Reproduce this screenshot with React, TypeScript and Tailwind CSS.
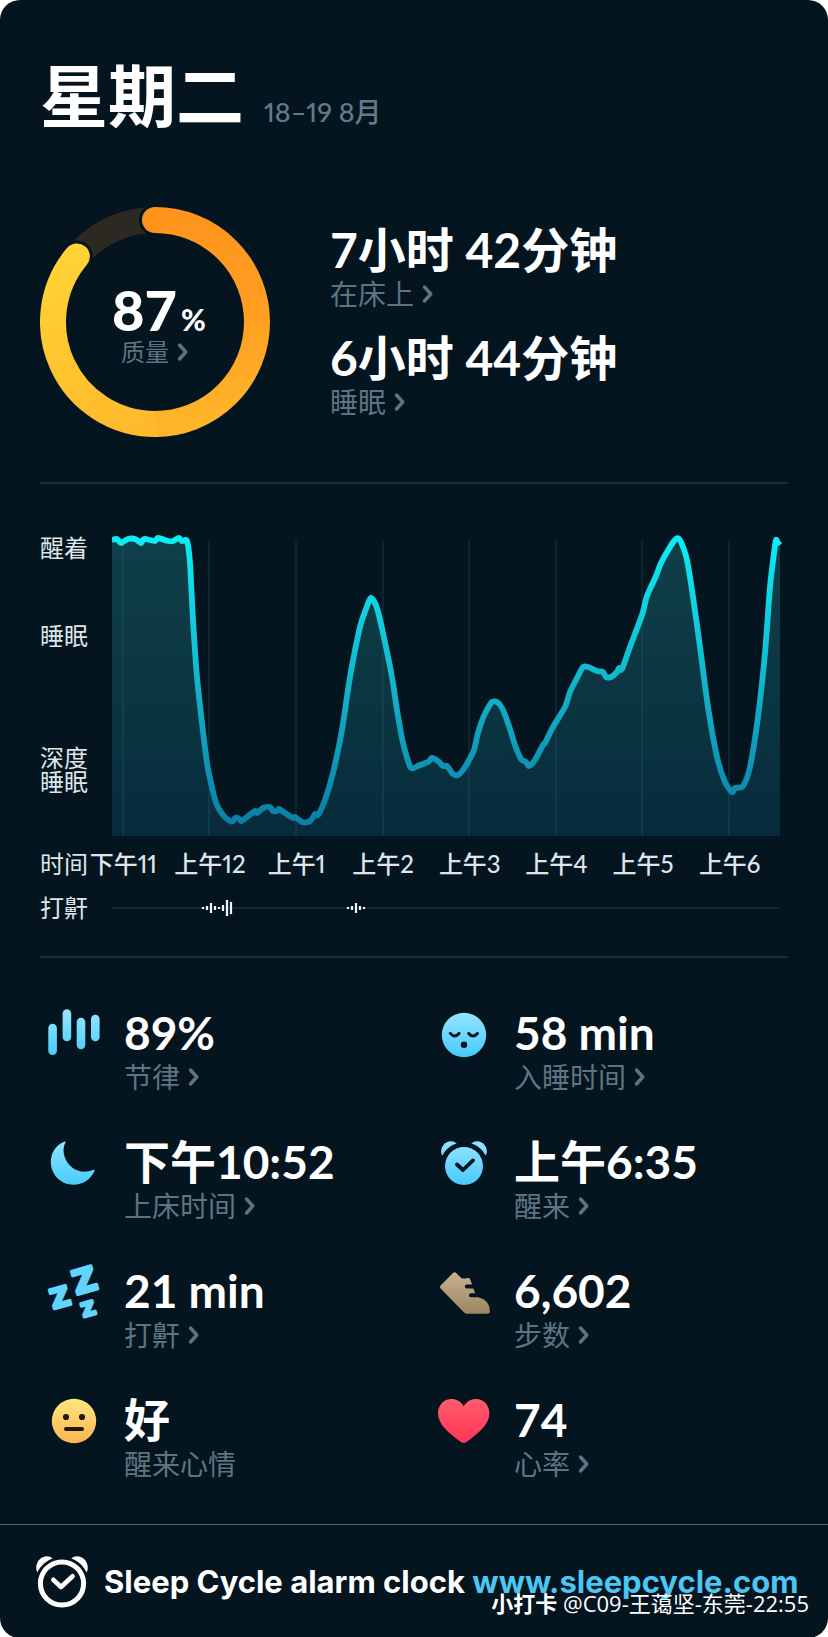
import React from 'react';

const points: [number, number][] = [
  [112, 540], [117, 539], [121, 543], [128, 539], [135, 539], [141, 543], [144, 539], [155, 541], [158, 538],
  [168, 541], [173, 541], [179, 538], [182, 541], [187, 541], [190, 563], [193, 620], [197, 677], [202, 723],
  [207, 763], [211, 783], [216, 803], [223, 815], [230, 821], [233, 821], [235, 818], [238, 818], [241, 821],
  [247, 817], [255, 811], [257, 813], [263, 808], [270, 807], [273, 811], [277, 811], [279, 809], [285, 813],
  [293, 818], [295, 817], [302, 822], [308, 822], [312, 819], [315, 814], [318, 815], [325, 800], [333, 773],
  [342, 730], [350, 677], [360, 627], [366, 609], [371, 598], [377, 608], [383, 633], [392, 677], [397, 710],
  [403, 743], [409, 764], [411, 768], [414, 768], [420, 765], [428, 762], [432, 758], [438, 761], [443, 766],
  [447, 766], [453, 774], [458, 775], [463, 770], [468, 762], [474, 750], [478, 733], [483, 718], [488, 708],
  [492, 702], [497, 702], [502, 708], [508, 723], [515, 745], [521, 759], [526, 762], [529, 766], [535, 760],
  [543, 745], [545, 743], [553, 727], [565, 707], [570, 692], [577, 678], [583, 667], [588, 667], [597, 671],
  [603, 672], [606, 677], [611, 677], [617, 672], [619, 668], [622, 669], [630, 647], [642, 615], [647, 596],
  [656, 576], [661, 563], [670, 547], [676, 539], [680, 540], [687, 560], [693, 597], [700, 647], [708, 707],
  [717, 757], [725, 782], [732, 792], [735, 788], [743, 786], [750, 767], [758, 717], [765, 653], [770, 587],
  [774, 553], [776, 540], [778, 543], [780, 541],
];

// Catmull-Rom spline through the samples, written as cubic segments
function smooth(pts: [number, number][]) {
  let d = '';
  for (let i = 0; i < pts.length - 1; i++) {
    const p0 = pts[Math.max(i - 1, 0)];
    const p1 = pts[i];
    const p2 = pts[i + 1];
    const p3 = pts[Math.min(i + 2, pts.length - 1)];
    const c1 = `${p1[0] + (p2[0] - p0[0]) / 8},${p1[1] + (p2[1] - p0[1]) / 8}`;
    const c2 = `${p2[0] - (p3[0] - p1[0]) / 8},${p2[1] - (p3[1] - p1[1]) / 8}`;
    d += ` C${c1} ${c2} ${p2[0]},${p2[1]}`;
  }
  return d;
}

const curve = `${points[0][0]},${points[0][1]}${smooth(points)}`;

const hours = ['下午11', '上午12', '上午1', '上午2', '上午3', '上午4', '上午5', '上午6'];
const gridLines = [123, 209, 296, 383, 469, 556, 642, 729];

// x, half height
const snores: [number, number][] = [
  [203, 1], [207, 2], [211, 5], [215, 2], [219, 1], [223, 3], [227, 8], [231, 6],
  [348, 1], [352, 2], [356, 5], [360, 2], [364, 1],
];

function Chevron() {
  return (
    <svg width="12" height="20" viewBox="0 0 12 20" fill="none" aria-hidden="true">
      <path d="M2.5 3 L8.8 10 L2.5 17" stroke="currentColor" strokeWidth="3.4" strokeLinecap="round" strokeLinejoin="round" />
    </svg>
  );
}

function BarsIcon() {
  return (
    <>
      <rect x="2.3" y="17.7" width="8.6" height="31.4" rx="4.3" fill="url(#blue)" />
      <rect x="16.6" y="3.3" width="8.6" height="32" rx="4.3" fill="url(#blue)" />
      <rect x="30.7" y="11.7" width="8.6" height="31.6" rx="4.3" fill="url(#blue)" />
      <rect x="45" y="8.7" width="8.6" height="26.5" rx="4.3" fill="url(#blue)" />
    </>
  );
}

function SleepyIcon() {
  return (
    <>
      <circle cx="28" cy="29" r="22.2" fill="url(#blue)" />
      <path d="M14.3 27.4 Q18.5 32.4 23 27.4 M32.7 27.4 Q37 32.4 41.4 27.4" fill="none" stroke="#05151f" strokeWidth="3" strokeLinecap="round" />
      <circle cx="28" cy="38.7" r="3.2" fill="#05151f" />
    </>
  );
}

function MoonIcon() {
  return (
    <path
      d="M18.6 6.4 C10 9.6 4.8 17.6 4.8 27 C4.8 39.6 14.8 49.7 27.3 49.7 C36.9 49.7 45 44.2 48.5 36 C48.9 34.9 48.1 34.4 47.2 34.8 C43 36.7 37.2 37.7 32 35.6 C24.5 32.8 19 26.4 17.8 18.2 C17.2 14.5 17.7 11 19.4 7.4 C19.7 6.6 19.3 6.2 18.6 6.4 Z"
      fill="url(#blue)"
    />
  );
}

function AlarmIcon() {
  return (
    <>
      <circle cx="28" cy="31" r="19" fill="url(#blue)" />
      <path d="M6.6 20.6 C4.4 18.6 4.6 13.4 7.4 9.9 C10.8 5.4 17 4.9 20.8 8.6 C14.6 10.4 9.4 14.6 6.6 20.6 Z" fill="url(#blue)" />
      <path d="M49.4 20.6 C51.6 18.6 51.4 13.4 48.6 9.9 C45.2 5.4 39 4.9 35.2 8.6 C41.4 10.4 46.6 14.6 49.4 20.6 Z" fill="url(#blue)" />
      <path d="M21 29.5 L27 35 L37 25.4" fill="none" stroke="#05151f" strokeWidth="3.8" strokeLinecap="round" strokeLinejoin="round" />
    </>
  );
}

function SnoreIcon() {
  return (
    <g fill="#62d3fc" stroke="#62d3fc" strokeWidth="3" strokeLinejoin="round" textAnchor="middle" className="font-['DejaVu_Sans',sans-serif] font-bold">
      <text x="0" y="12" fontSize="33" transform="translate(38.5 16.2) rotate(-16)">Z</text>
      <text x="0" y="9" fontSize="27" transform="translate(14.2 34) rotate(-16)">Z</text>
      <text x="0" y="7" fontSize="19" transform="translate(42.2 44.6) rotate(-16)">Z</text>
    </g>
  );
}

function ShoeIcon() {
  return (
    <>
      <path
        d="M4.6 21.4 L17 8.9 Q18.6 7.4 20.2 9 L25.3 14 Q27.6 15 31.5 14 Q33.6 13.6 34.2 15.2 L39.2 29.5 Q40.4 33 44 33.9 C50.5 35.6 53.6 40.6 53.9 47 Q54 49.8 51.4 49.8 H31.5 Q29.4 49.8 27.8 48.2 L4.6 24.4 Q3.2 22.9 4.6 21.4 Z"
        fill="url(#tan)"
      />
      <path d="M30.8 22.4 H41 M35 31.2 H42" stroke="#05151f" strokeWidth="4" strokeLinecap="round" />
    </>
  );
}

function MoodIcon() {
  return (
    <>
      <circle cx="28" cy="28" r="22.2" fill="url(#yellow)" />
      <circle cx="20" cy="24" r="3.1" fill="#1c1a14" />
      <circle cx="36" cy="24" r="3.1" fill="#1c1a14" />
      <path d="M20 36 H36" stroke="#1c1a14" strokeWidth="4" strokeLinecap="round" />
    </>
  );
}

function HeartIcon() {
  return (
    <path
      d="M27.7 13.3 C24.6 8.4 20.4 6 15.6 6 C7.8 6 2 12.2 2 20 C2 31.6 12.4 39.6 24.6 48.8 Q27.7 51.2 30.8 48.8 C43 39.6 53.4 31.6 53.4 20 C53.4 12.2 47.6 6 39.8 6 C35 6 30.8 8.4 27.7 13.3 Z"
      fill="url(#red)"
    />
  );
}

const stats = [
  { value: '89%', label: '节律', icon: BarsIcon, link: true },
  { value: '58 min', label: '入睡时间', icon: SleepyIcon, link: true },
  { value: '下午10:52', label: '上床时间', icon: MoonIcon, link: true },
  { value: '上午6:35', label: '醒来', icon: AlarmIcon, link: true },
  { value: '21 min', label: '打鼾', icon: SnoreIcon, link: true },
  { value: '6,602', label: '步数', icon: ShoeIcon, link: true },
  { value: '好', label: '醒来心情', icon: MoodIcon, link: false },
  { value: '74', label: '心率', icon: HeartIcon, link: true },
];

const durations = [
  { value: '7小时 42分钟', label: '在床上' },
  { value: '6小时 44分钟', label: '睡眠' },
];

function Gradients() {
  return (
    <svg width="0" height="0" className="absolute" aria-hidden="true">
      <defs>
        <linearGradient id="blue" gradientUnits="userSpaceOnUse" x1="28" y1="4" x2="28" y2="52">
          <stop offset="0" stopColor="#96e6ff" />
          <stop offset="1" stopColor="#45cafc" />
        </linearGradient>
        <linearGradient id="tan" x1="0" y1="0" x2="0" y2="1">
          <stop offset="0" stopColor="#c9b28f" />
          <stop offset="1" stopColor="#9c8563" />
        </linearGradient>
        <linearGradient id="yellow" x1="0" y1="0" x2="0" y2="1">
          <stop offset="0" stopColor="#ffe680" />
          <stop offset="1" stopColor="#fdb54f" />
        </linearGradient>
        <linearGradient id="red" x1="0" y1="0" x2="0" y2="1">
          <stop offset="0" stopColor="#ff5c6b" />
          <stop offset="1" stopColor="#ff3557" />
        </linearGradient>
      </defs>
    </svg>
  );
}

function QualityRing() {
  return (
    <div className="grid shrink-0 place-items-center">
      <svg width="230" height="230" viewBox="0 0 230 230" fill="none" className="col-start-1 row-start-1" aria-hidden="true">
        <defs>
          <linearGradient id="ringRight" gradientUnits="userSpaceOnUse" x1="115" y1="0" x2="115" y2="230">
            <stop offset="0" stopColor="#ff931c" />
            <stop offset="0.5" stopColor="#ffa022" />
            <stop offset="1" stopColor="#ffb82a" />
          </linearGradient>
          <linearGradient id="ringLeft" gradientUnits="userSpaceOnUse" x1="115" y1="230" x2="40" y2="40">
            <stop offset="0" stopColor="#ffb82a" />
            <stop offset="1" stopColor="#ffd335" />
          </linearGradient>
        </defs>
        <circle cx="115" cy="115" r="102" stroke="#2c2822" strokeWidth="26" />
        <path d="M115 13 A102 102 0 1 1 36.9 49.4" stroke="#05151f" strokeWidth="32" strokeLinecap="round" />
        <path d="M115 217 A102 102 0 0 1 36.9 49.4" stroke="url(#ringLeft)" strokeWidth="26" strokeLinecap="round" />
        <path d="M115 13 A102 102 0 0 1 115 217" stroke="url(#ringRight)" strokeWidth="26" />
        <path d="M115 0 A13 13 0 0 0 115 26 Z" fill="#ff941c" />
      </svg>
      <div className="col-start-1 row-start-1 flex flex-col items-center pt-1">
        <p className="flex items-baseline gap-1 pl-2 text-[56px] leading-[56px] font-black">
          87<span className="text-3xl">%</span>
        </p>
        <button type="button" className="flex items-center gap-2 text-2xl leading-7 text-[#5f7482]">
          质量
          <Chevron />
        </button>
      </div>
    </div>
  );
}

function SleepChart() {
  return (
    <section className="px-10 pt-[46px]">
      <div className="flex text-2xl text-[#dfe5ea]">
        <div className="w-[72px] shrink-0 pt-[6px] leading-6">
          <p>醒着</p>
          <p className="mt-16">睡眠</p>
          <p className="mt-[98px]">
            深度
            <br />
            睡眠
          </p>
        </div>
        <svg viewBox="112 530 676 306" className="min-w-0 flex-1" role="img" aria-label="睡眠">
          <defs>
            <linearGradient id="stroke" gradientUnits="userSpaceOnUse" x1="0" y1="540" x2="0" y2="830">
              <stop offset="0" stopColor="#0decf4" />
              <stop offset="0.5" stopColor="#12b4cb" />
              <stop offset="1" stopColor="#0b7ca3" />
            </linearGradient>
            <linearGradient id="area" gradientUnits="userSpaceOnUse" x1="0" y1="540" x2="0" y2="836">
              <stop offset="0" stopColor="#0f3f49" />
              <stop offset="0.6" stopColor="#0a3440" />
              <stop offset="1" stopColor="#082b3c" />
            </linearGradient>
          </defs>
          <path d={`M112,836 L${curve} L780,836 Z`} fill="url(#area)" />
          {gridLines.map((x) => (
            <path key={x} d={`M${x} 540 V836`} stroke="#3580a8" strokeOpacity="0.15" strokeWidth="2" />
          ))}
          <path d={`M${curve}`} fill="none" stroke="url(#stroke)" strokeWidth="5.8" strokeLinejoin="round" />
        </svg>
      </div>

      <div className="mt-[14px] flex text-2xl leading-7 text-[#dfe5ea]">
        <span className="w-10 shrink-0 whitespace-nowrap">时间</span>
        <div className="mr-[15px] grid flex-1 grid-cols-8 font-medium proportional-nums">
          {hours.map((hour) => (
            <span key={hour} className="justify-self-center whitespace-nowrap">
              {hour}
            </span>
          ))}
        </div>
      </div>

      <div className="mt-4 flex items-center text-2xl leading-7 text-[#dfe5ea]">
        <span className="w-[72px] shrink-0">打鼾</span>
        <svg viewBox="112 -12 676 24" className="min-w-0 flex-1" aria-hidden="true">
          <path d="M112 0 H780" stroke="#0f2833" strokeWidth="2" />
          {snores.map(([x, h]) => (
            <path key={x} d={`M${x} ${-h} V${h}`} stroke="#f2f5f7" strokeWidth="2.2" />
          ))}
        </svg>
      </div>
    </section>
  );
}

export default function App() {
  return (
    <div className="bg-white">
      <Gradients />
      <main className="relative rounded-[20px] bg-[#05151f] font-[Lato,'Noto_Sans_CJK_SC',sans-serif] text-white">
        <header className="flex items-baseline gap-5 px-10 pt-14">
          <h1 className="text-[68px] leading-[80px] font-bold">星期二</h1>
          <p className="text-[27px] leading-8 font-medium text-[#64798a] proportional-nums">18–19 8月</p>
        </header>

        <section className="mt-[71px] flex items-center gap-[60px] px-10">
          <QualityRing />
          <div className="flex flex-col gap-5 pt-1">
            {durations.map((item) => (
              <div key={item.label}>
                <p className="text-5xl leading-[48px] font-bold">{item.value}</p>
                <button type="button" className="flex items-center gap-2 text-[28px] leading-10 text-[#5f7482]">
                  {item.label}
                  <Chevron />
                </button>
              </div>
            ))}
          </div>
        </section>

        <hr className="mx-10 mt-[45px] border-t-2 border-[#172f40]" />

        <SleepChart />

        <hr className="mx-10 mt-[34px] border-t-2 border-[#172f40]" />

        <section className="mt-12 grid grid-cols-2 gap-y-[38px] pr-2 pl-10">
          {stats.map((stat) => {
            const Icon = stat.icon;
            return (
              <div key={stat.label} className="flex items-start gap-4">
                <div className="flex w-[68px] shrink-0 justify-center">
                  <svg width="56" height="56" viewBox="0 0 56 56" className="overflow-visible" aria-hidden="true">
                    <Icon />
                  </svg>
                </div>
                <div className="pt-[3px]">
                  <p className="text-[46px] leading-[48px] font-bold">{stat.value}</p>
                  {stat.link ? (
                    <button type="button" className="flex items-center gap-2 text-[28px] leading-10 text-[#5f7482]">
                      {stat.label}
                      <Chevron />
                    </button>
                  ) : (
                    <p className="text-[28px] leading-10 text-[#5f7482]">{stat.label}</p>
                  )}
                </div>
              </div>
            );
          })}
        </section>

        <footer className="mt-10 flex h-[114px] items-center border-t border-[#4a6272] pl-9">
          <svg width="52" height="52" viewBox="0 0 52 52" className="shrink-0" aria-hidden="true">
            <circle cx="26" cy="27.5" r="21.6" fill="none" stroke="#fff" strokeWidth="5" />
            <path d="M1.4 16.4 C-1 12 .4 6.4 4 3 C7.8 -.6 13.4 -.8 16.6 2.4 C10 4.8 4.6 9.6 1.4 16.4 Z" fill="#fff" />
            <path d="M50.6 16.4 C53 12 51.6 6.4 48 3 C44.2 -.6 38.6 -.8 35.4 2.4 C42 4.8 47.4 9.6 50.6 16.4 Z" fill="#fff" />
            <path d="M17.4 23.8 L25 31 L36.6 20.2" fill="none" stroke="#fff" strokeWidth="4.6" strokeLinecap="round" strokeLinejoin="round" />
          </svg>
          <p className="ml-4 font-[Inter,sans-serif] text-[31px] leading-10 font-bold whitespace-nowrap">
            Sleep Cycle alarm clock{' '}
            <a href="https://www.sleepcycle.com" className="text-[#4cc6f2]">
              www.sleepcycle.com
            </a>
          </p>
        </footer>

        <p className="absolute right-[19px] bottom-[19px] font-['Open_Sans','Noto_Sans_CJK_SC',sans-serif] text-[22px] leading-8 whitespace-nowrap">
          <span className="font-bold">小打卡</span> @C09-王蔼坚-东莞-22:55
        </p>
      </main>
    </div>
  );
}
